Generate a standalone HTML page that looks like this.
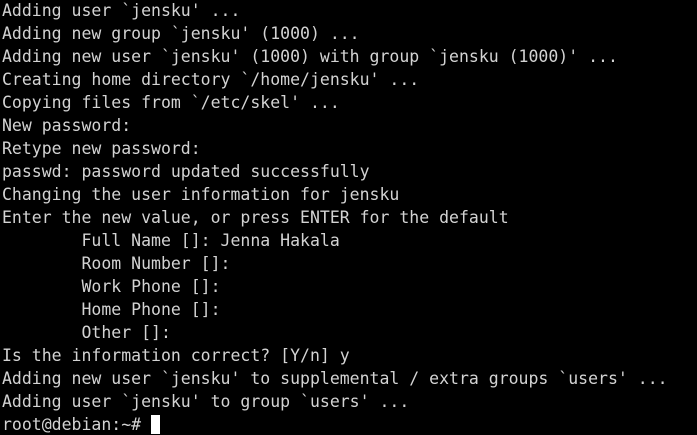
<!DOCTYPE html>
<html><head><style>
html,body{margin:0;padding:0;background:#000;width:697px;height:435px;overflow:hidden}
pre{margin:0;padding:0 0 0 2px;font-family:"DejaVu Sans Mono",monospace;font-size:16.5px;line-height:23px;color:#d3d3d3;position:relative;top:-1px}
.c{display:inline-block;width:9px;height:19px;background:#fff;vertical-align:-4px}
</style></head><body><pre>Adding user `jensku' ...
Adding new group `jensku' (1000) ...
Adding new user `jensku' (1000) with group `jensku (1000)' ...
Creating home directory `/home/jensku' ...
Copying files from `/etc/skel' ...
New password:
Retype new password:
passwd: password updated successfully
Changing the user information for jensku
Enter the new value, or press ENTER for the default
        Full Name []: Jenna Hakala
        Room Number []:
        Work Phone []:
        Home Phone []:
        Other []:
Is the information correct? [Y/n] y
Adding new user `jensku' to supplemental / extra groups `users' ...
Adding user `jensku' to group `users' ...
root@debian:~# <span class="c"></span></pre></body></html>
